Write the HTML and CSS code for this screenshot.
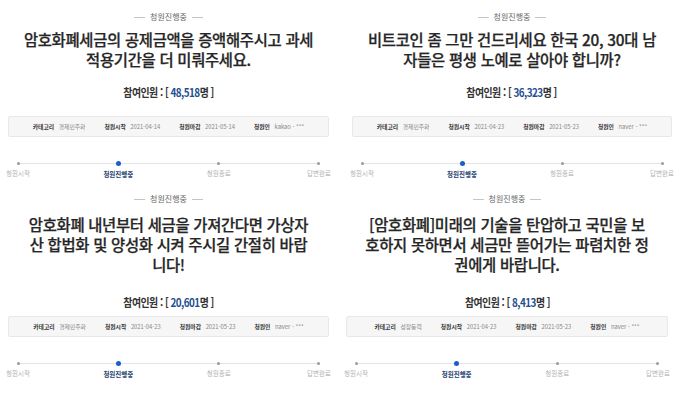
FILE: index.html
```html
<!DOCTYPE html>
<html lang="ko">
<head>
    <meta charset="UTF-8">
    <meta name="viewport" content="width=device-width, initial-scale=1.0">
    <title>청원진행중</title>
    <link rel="stylesheet" href="styles.css">
</head>
<body>
    <div class="board">
        <section class="petition petition-top left">
            <p class="status">청원진행중</p>
            <h2 class="title">암호화폐세금의 공제금액을 증액해주시고 과세<br>적용기간을 더 미뤄주세요.</h2>
            <p class="count">참여인원 : [ <span>48,518</span>명 ]</p>
            <ul class="info">
                <li><b>카테고리</b> 경제민주화</li>
                <li><b>청원시작</b> 2021-04-14</li>
                <li><b>청원마감</b> 2021-05-14</li>
                <li><b>청원인</b> kakao - ***</li>
            </ul>
            <ol class="steps">
                <li>청원시작</li>
                <li class="active">청원진행중</li>
                <li>청원종료</li>
                <li>답변완료</li>
            </ol>
        </section>

        <section class="petition petition-top right">
            <p class="status">청원진행중</p>
            <h2 class="title">비트코인 좀 그만 건드리세요 한국 20, 30대 남<br>자들은 평생 노예로 살아야 합니까?</h2>
            <p class="count">참여인원 : [ <span>36,323</span>명 ]</p>
            <ul class="info">
                <li><b>카테고리</b> 경제민주화</li>
                <li><b>청원시작</b> 2021-04-23</li>
                <li><b>청원마감</b> 2021-05-23</li>
                <li><b>청원인</b> naver - ***</li>
            </ul>
            <ol class="steps">
                <li>청원시작</li>
                <li class="active">청원진행중</li>
                <li>청원종료</li>
                <li>답변완료</li>
            </ol>
        </section>

        <section class="petition petition-bottom left">
            <p class="status">청원진행중</p>
            <h2 class="title">암호화폐 내년부터 세금을 가져간다면 가상자<br>산 합법화 및 양성화 시켜 주시길 간절히 바랍<br>니다!</h2>
            <p class="count">참여인원 : [ <span>20,601</span>명 ]</p>
            <ul class="info">
                <li><b>카테고리</b> 경제민주화</li>
                <li><b>청원시작</b> 2021-04-23</li>
                <li><b>청원마감</b> 2021-05-23</li>
                <li><b>청원인</b> naver - ***</li>
            </ul>
            <ol class="steps">
                <li>청원시작</li>
                <li class="active">청원진행중</li>
                <li>청원종료</li>
                <li>답변완료</li>
            </ol>
        </section>

        <section class="petition petition-bottom right shifted">
            <p class="status">청원진행중</p>
            <h2 class="title">[암호화폐]미래의 기술을 탄압하고 국민을 보<br>호하지 못하면서 세금만 뜯어가는 파렴치한 정<br>권에게 바랍니다.</h2>
            <p class="count">참여인원 : [ <span>8,413</span>명 ]</p>
            <ul class="info">
                <li><b>카테고리</b> 성장동력</li>
                <li><b>청원시작</b> 2021-04-23</li>
                <li><b>청원마감</b> 2021-05-23</li>
                <li><b>청원인</b> naver - ***</li>
            </ul>
            <ol class="steps">
                <li>청원시작</li>
                <li class="active">청원진행중</li>
                <li>청원종료</li>
                <li>답변완료</li>
            </ol>
        </section>
    </div>
</body>
</html>
```

FILE: styles.css
```css
body {
    margin: 0;
    background: #fff;
    font-family: "Noto Sans CJK KR", "Noto Sans", sans-serif;
    color: #222;
}

.board {
    display: grid;
    grid-template-columns: 340px 340px;
    grid-template-rows: 185px 214px;
    width: 680px;
    height: 399px;
    overflow: hidden;
}

.petition {
    display: flex;
    flex-direction: column;
    align-items: center;
    text-align: center;
}

.petition.left {
    padding: 0 11px 0 8px;
}

.petition.right {
    padding: 0 8px 0 12px;
}

.petition.right.shifted {
    padding: 0 12px 0 6px;
}

/* status label with short rules either side */
.status {
    margin: 12px 0 0;
    font-size: 8px;
    line-height: 10px;
    color: #666;
}

.status::before,
.status::after {
    content: "";
    display: inline-block;
    width: 11px;
    height: 1px;
    background: #c4c4c4;
    vertical-align: middle;
    margin: 0 5px;
}

.title {
    margin: 7px 0 0;
    font-family: "Noto Sans CJK KR Medium", "Noto Sans CJK KR", sans-serif;
    font-size: 15.4px;
    line-height: 20px;
    font-weight: 500;
    letter-spacing: -0.3px;
    color: #262626;
    white-space: nowrap;
    -webkit-text-stroke: 0.25px #262626;
}

/* the source font is narrow, so squeeze the line a little */
.count {
    margin: 16px 0 0;
    font-size: 11.5px;
    line-height: 14px;
    font-weight: 700;
    letter-spacing: -0.6px;
    color: #333;
    white-space: nowrap;
    transform: scaleX(0.86);
}

.count span {
    color: #1e4f8f;
}

.info {
    list-style: none;
    display: flex;
    justify-content: center;
    gap: 19px;
    width: 100%;
    box-sizing: border-box;
    margin: 17px 0 0;
    padding: 6px 0;
    background: #f6f6f6;
    border: 1px solid #e8e8e8;
    border-radius: 2px;
    font-size: 5.8px;
    line-height: 7px;
    color: #888;
}

.info b {
    color: #333;
    margin-right: 3px;
}

/* progress track */
.steps {
    list-style: none;
    display: flex;
    justify-content: space-between;
    align-self: stretch;
    margin: 24px -5px 0;
    padding: 0;
    background: linear-gradient(#e4e4e4, #e4e4e4) no-repeat 15px 2px / calc(100% - 30px) 1px;
}

.steps li {
    width: 30px;
    display: flex;
    flex-direction: column;
    align-items: center;
    font-size: 6.5px;
    line-height: 8px;
    color: #b3b3b3;
    white-space: nowrap;
}

.steps li::before {
    content: "";
    display: block;
    width: 3px;
    height: 3px;
    margin: 1px 0 4px;
    border-radius: 50%;
    background: #9a9a9a;
}

.steps li.active {
    color: #27446f;
    font-weight: 700;
}

.steps li.active::before {
    width: 5px;
    height: 5px;
    margin: 0 0 4px;
    background: #1a5fc8;
}

.petition-bottom .status {
    margin-top: 9px;
}

.petition-bottom .title {
    margin-top: 10px;
}

.petition-bottom .count {
    margin-top: 21px;
}

.petition-bottom .info {
    margin-top: 7px;
}
```
